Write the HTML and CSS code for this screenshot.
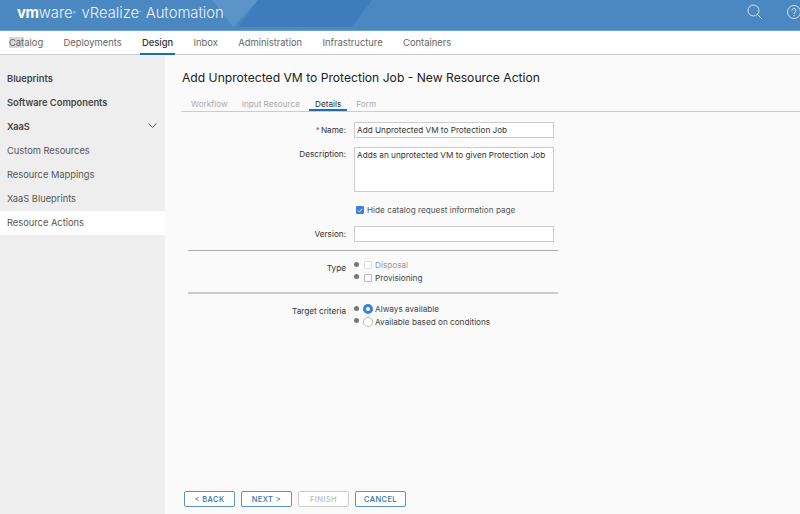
FILE: index.html
```html
<!DOCTYPE html>
<html lang="en">
<head>
    <meta charset="UTF-8">
    <meta name="viewport" content="width=device-width, initial-scale=1.0">
    <title>vRealize Automation</title>
    <link rel="stylesheet" href="styles.css">
</head>
<body>
    <!-- Top banner -->
    <header class="banner">
        <svg class="banner-shapes" width="800" height="30" viewBox="0 0 800 30">
            <polygon points="212,0 258,0 233,27" fill="#5a94c8"/>
            <polygon points="258,0 372,0 352,27 238,27" fill="#3f7cbc"/>
        </svg>
        <div class="brand"><span class="brand-vm">vm</span><span class="brand-ware">ware<sup>®</sup></span> <span class="brand-product">vRealize<sup>™</sup> Automation</span></div>
        <div class="banner-icons">
            <svg width="16" height="16" viewBox="0 0 16 16" fill="none" stroke="#d5e3f1" stroke-width="1">
                <circle cx="6.5" cy="6.5" r="5.5"/>
                <line x1="10.5" y1="10.5" x2="15" y2="15"/>
            </svg>
            <svg class="help-icon" width="14" height="14" viewBox="0 0 14 14" fill="none" stroke="#d5e3f1" stroke-width="1">
                <circle cx="7" cy="7" r="6.5"/>
                <path d="M5 5.5 A2 2 0 1 1 7.6 7.4 C7 7.7 7 8 7 9"/>
                <line x1="7" y1="10" x2="7" y2="11"/>
            </svg>
        </div>
    </header>

    <!-- Main nav -->
    <nav class="main-nav">
        <a href="#"><span class="selected-text">Cat</span>alog</a>
        <a href="#">Deployments</a>
        <a href="#" class="active">Design</a>
        <a href="#">Inbox</a>
        <a href="#">Administration</a>
        <a href="#">Infrastructure</a>
        <a href="#">Containers</a>
    </nav>

    <div class="layout">
        <aside class="sidebar">
            <div class="side-item side-head">Blueprints</div>
            <div class="side-item side-head">Software Components</div>
            <div class="side-item side-head side-group">XaaS
                <svg width="9" height="6" viewBox="0 0 9 6" fill="none" stroke="#555" stroke-width="1"><path d="M0.5 0.5 L4.5 4.5 L8.5 0.5"/></svg>
            </div>
            <div class="side-item">Custom Resources</div>
            <div class="side-item">Resource Mappings</div>
            <div class="side-item">XaaS Blueprints</div>
            <div class="side-item current">Resource Actions</div>
        </aside>

        <main class="content">
            <h1>Add Unprotected VM to Protection Job - New Resource Action</h1>

            <div class="tabs">
                <span>Workflow</span>
                <span>Input Resource</span>
                <span class="active">Details</span>
                <span>Form</span>
            </div>

            <form class="details-form">
                <div class="form-row">
                    <label><span class="required">*</span>Name:</label>
                    <div class="text-box">Add Unprotected VM to Protection Job</div>
                </div>
                <div class="form-row desc-row">
                    <label>Description:</label>
                    <div class="text-box text-area">Adds an unprotected VM to given Protection Job</div>
                </div>
                <div class="form-row hide-row">
                    <span></span>
                    <div class="check-line">
                        <span class="checkbox checked">
                            <svg width="9" height="9" viewBox="0 0 9 9" fill="none" stroke="#fff" stroke-width="1.3"><path d="M1.5 4.5 L3.7 6.7 L7.5 2"/></svg>
                        </span>
                        Hide catalog request information page
                    </div>
                </div>
                <div class="form-row version-row">
                    <label>Version:</label>
                    <div class="text-box"></div>
                </div>

                <hr class="rule">

                <div class="form-row option-row">
                    <label>Type</label>
                    <div class="option-list">
                        <div class="option disabled"><i class="dot"></i><span class="checkbox"></span>Disposal</div>
                        <div class="option"><i class="dot"></i><span class="checkbox"></span>Provisioning</div>
                    </div>
                </div>

                <hr class="rule rule-thick">

                <div class="form-row option-row target-row">
                    <label>Target criteria</label>
                    <div class="option-list">
                        <div class="option"><i class="dot"></i><span class="radio checked"></span>Always available</div>
                        <div class="option"><i class="dot"></i><span class="radio"></span>Available based on conditions</div>
                    </div>
                </div>
            </form>

            <div class="wizard-buttons">
                <button type="button">&lt; BACK</button>
                <button type="button">NEXT &gt;</button>
                <button type="button" disabled>FINISH</button>
                <button type="button" class="cancel">CANCEL</button>
            </div>
        </main>
    </div>
</body>
</html>
```

FILE: styles.css
```css
html, body {
    height: 100%;
}

body {
    margin: 0;
    display: flex;
    flex-direction: column;
    overflow: hidden;
    background-color: #fafafa;
    color: #333;
    font-family: Inter, "Open Sans", sans-serif;
    font-size: 8.2px;
}

/* Banner */
.banner {
    position: relative;
    flex: none;
    display: flex;
    align-items: center;
    justify-content: space-between;
    height: 30px;
    background-color: #4b88c2;
    border-bottom: 1px solid #6ea1d0;
    color: #fff;
}

.banner-shapes {
    position: absolute;
    top: 0;
    left: 0;
}

.brand {
    position: relative;
    padding-left: 17px;
    padding-bottom: 5px;
    font-size: 14.8px;
    font-weight: 300;
    white-space: nowrap;
    color: #eef4fa;
}

.brand-vm {
    font-weight: 700;
    color: #fff;
    letter-spacing: -0.3px;
}

.brand-ware {
    margin-right: 2px;
}

.brand sup {
    font-size: 4px;
    vertical-align: 4px;
}

.banner-icons {
    position: relative;
    display: flex;
    align-items: center;
    gap: 24px;
    margin-right: -1px;
    padding-bottom: 6px;
}

/* Main nav */
.main-nav {
    flex: none;
    display: flex;
    gap: 20.4px;
    height: 23px;
    padding-left: 9px;
    background-color: #fff;
    border-bottom: 1px solid #ccc;
}

.main-nav a {
    line-height: 24px;
    font-size: 9.4px;
    color: #666;
    text-decoration: none;
}

.main-nav a.active {
    color: #333;
    font-weight: 500;
    height: 22px;
    margin: 0 -2px;
    padding: 0 2px;
    border-bottom: 2px solid #1d6fa8;
}

.selected-text {
    background-color: #d8d8d8;
}

.layout {
    flex: 1;
    display: flex;
    min-height: 0;
}

/* Sidebar */
.sidebar {
    flex: none;
    width: 165px;
    padding-top: 12px;
    box-sizing: border-box;
    background-color: #eee;
    font-size: 9.3px;
}

.side-item {
    display: flex;
    align-items: center;
    justify-content: space-between;
    box-sizing: border-box;
    height: 24px;
    padding: 0 7px 2px;
    color: #555;
}

.side-head {
    font-weight: 600;
    color: #444;
}

.side-group svg {
    margin-right: 1px;
}

.side-item.current {
    background-color: #fff;
}

/* Content */
.content {
    flex: 1;
    display: flex;
    flex-direction: column;
    min-width: 0;
}

h1 {
    margin: 15px 0 0 17px;
    font-size: 12.13px;
    line-height: 16px;
    font-weight: 400;
    color: #222;
}

.tabs {
    display: flex;
    gap: 14px;
    height: 15px;
    margin: 10px 0 0 16px;
    padding-left: 10px;
    border-bottom: 1px solid #ccc;
    color: #aaa;
    line-height: 16px;
}

.tabs .active {
    height: 13px;
    margin: 0 -5px;
    padding: 0 6px;
    border-bottom: 2px solid #1d6fa8;
    color: #333;
}

.details-form {
    padding: 10px 0 0 23px;
    width: 370px;
}

.form-row {
    display: grid;
    grid-template-columns: 158px 200px;
    column-gap: 8px;
    align-items: center;
}

.form-row label {
    text-align: right;
    color: #333;
}

.required {
    color: #d9451c;
    margin-right: 1px;
}

.text-box {
    box-sizing: border-box;
    height: 16px;
    padding: 0 2px;
    line-height: 14px;
    background-color: #fff;
    border: 1px solid #ccc;
    color: #333;
}

.desc-row {
    align-items: start;
    margin-top: 9px;
}

.desc-row label {
    padding-top: 2px;
}

.text-area {
    height: 45px;
}

.hide-row {
    margin-top: 13px;
}

.check-line {
    display: flex;
    align-items: center;
    gap: 3px;
    padding-left: 2px;
    color: #555;
}

.version-row {
    margin-top: 11px;
}

.checkbox {
    display: inline-flex;
    align-items: center;
    justify-content: center;
    box-sizing: border-box;
    width: 8px;
    height: 8px;
    background-color: #fff;
    border: 1px solid #bbb;
    border-radius: 1px;
}

.checkbox.checked {
    background-color: #3d7fe0;
    border-color: #3d7fe0;
}

.rule {
    width: 370px;
    height: 1px;
    margin: 8px 0 0;
    background-color: #aaa;
    border: none;
}

.rule-thick {
    height: 2px;
    background-color: #ccc;
}

.option-row {
    margin-top: 8px;
}

.target-row {
    margin-top: 9px;
}

.option-row label {
    align-self: start;
    padding-top: 4px;
}

.target-row label {
    padding-top: 3px;
}

.option {
    display: flex;
    align-items: center;
    height: 12.5px;
    color: #444;
}

.option.disabled {
    color: #999;
}

.option.disabled .checkbox {
    border-color: #ddd;
}

.dot {
    width: 5px;
    height: 5px;
    margin: 0 5px 0 0;
    border-radius: 50%;
    background-color: #777;
    transform: translateY(-1px);
}

.option .checkbox {
    margin-right: 3px;
}

.radio {
    box-sizing: border-box;
    width: 10px;
    height: 10px;
    margin-right: 2px;
    margin-left: -1px;
    background-color: #fff;
    border: 1px solid #bbb;
    border-radius: 50%;
}

.radio.checked {
    border: 3px solid #3d7fe0;
}

/* Wizard buttons */
.wizard-buttons {
    display: flex;
    gap: 6px;
    margin-top: auto;
    padding: 0 0 7px 19px;
}

.wizard-buttons button {
    box-sizing: border-box;
    width: 51px;
    height: 16px;
    padding: 0;
    background-color: #fff;
    border: 1px solid #5a93c4;
    border-radius: 2px;
    color: #2f74a8;
    font-family: inherit;
    font-size: 7.5px;
    font-weight: 500;
    letter-spacing: 0.4px;
}

.wizard-buttons button:disabled {
    border-color: #ccc;
    color: #bbb;
}
```
